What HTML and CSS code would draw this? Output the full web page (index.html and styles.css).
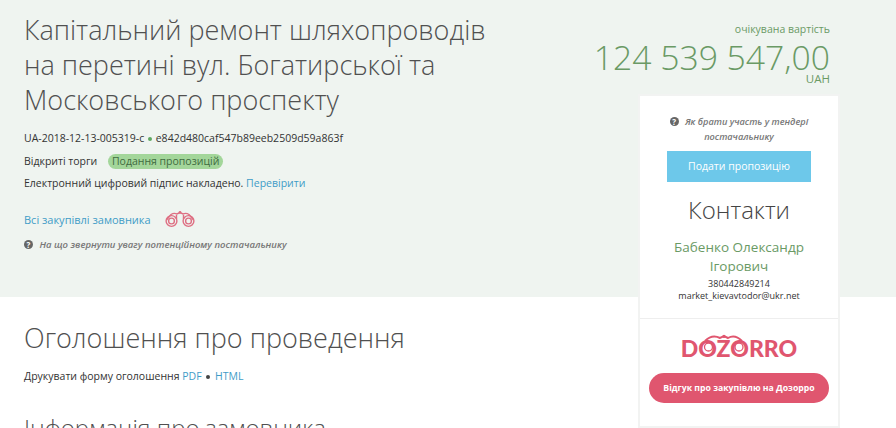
FILE: index.html
```html
<!DOCTYPE html>
<html lang="uk">
<head>
    <meta charset="UTF-8">
    <title>Капітальний ремонт шляхопроводів</title>
    <link rel="stylesheet" href="styles.css">
</head>
<body>
    <div class="page">
        <!-- Ліва колонка -->
        <div class="main">
            <h1 class="title">Капітальний ремонт шляхопроводів на перетині вул. Богатирської та Московського проспекту</h1>
            <p class="line">UA-2018-12-13-005319-c <span class="dot dot-green"></span> e842d480caf547b89eeb2509d59a863f</p>
            <p class="line">Відкриті торги <span class="status">Подання пропозицій</span></p>
            <p class="line">Електронний цифровий підпис накладено. <a href="#">Перевірити</a></p>
            <p class="buyer-line">
                <a href="#">Всі закупівлі замовника</a>
                <svg class="binoculars" width="32" height="18" viewBox="0 0 32 18" fill="none" stroke="#de6f83" stroke-width="1.4">
                    <path d="M2.5 10 L7 4.5 Q10 2.5 13 4 L16 2.6 L19 4 Q22 2.5 25 4.5 L29.5 10"/>
                    <path d="M12.5 9 L12.5 5 M19.5 9 L19.5 5"/>
                    <circle cx="16" cy="2.4" r="1.4" fill="#de6f83" stroke="none"/>
                    <circle cx="7.5" cy="11" r="5.4"/>
                    <circle cx="7.5" cy="11" r="2.9"/>
                    <circle cx="24.5" cy="11" r="5.4"/>
                    <circle cx="24.5" cy="11" r="2.9"/>
                </svg>
            </p>
            <p class="hint"><span class="hint-icon">?</span> На що звернути увагу потенційному постачальнику</p>

            <h2 class="section-title">Оголошення про проведення</h2>
            <p class="line print-line">Друкувати форму оголошення <a href="#">PDF</a> <span class="dot dot-dark"></span> <a href="#">HTML</a></p>
            <h2 class="subsection-title">Інформація про замовника</h2>
        </div>

        <!-- Права колонка -->
        <div class="side">
            <div class="price">
                <div class="price-label">очікувана вартість</div>
                <div class="price-value">124 539 547,00</div>
                <div class="price-cur">UAH</div>
            </div>
            <div class="card">
                <div class="card-top">
                    <p class="hint hint-center"><span class="hint-icon">?</span> Як брати участь у тендері постачальнику</p>
                    <a href="#" class="btn-blue">Подати пропозицію</a>
                    <div class="contacts-title">Контакти</div>
                    <div class="contact-name">Бабенко Олександр Ігорович</div>
                    <div class="contact-info">380442849214</div>
                    <div class="contact-info">market_kievavtodor@ukr.net</div>
                </div>
                <div class="card-bottom">
                    <div class="logo">
                        DOZORRO
                        <svg class="logo-eyes" width="50" height="26" viewBox="0 0 50 26" fill="none" stroke="#e0566f">
                            <path d="M6 10 Q13 3 21 7 L25 5 L29 7 Q36 3 43 10" stroke-width="2"/>
                            <circle cx="25" cy="5.4" r="1.6" fill="#e0566f" stroke="none"/>
                            <circle cx="9.5" cy="16" r="4" stroke-width="1.3"/>
                            <circle cx="40" cy="16" r="4" stroke-width="1.3"/>
                        </svg>
                    </div>
                    <a href="#" class="btn-red">Відгук про закупівлю на Дозорро</a>
                </div>
            </div>
        </div>
    </div>
</body>
</html>
```

FILE: styles.css
```css
* {
    margin: 0;
    padding: 0;
    box-sizing: border-box;
}
html, body {
    height: 428px;
    overflow: hidden;
}
body {
    font-family: 'Open Sans', sans-serif;
    color: #333;
    background: #fff;
}
a {
    color: #3f9cc7;
    text-decoration: none;
}

.page {
    display: flex;
    height: 428px;
    overflow: hidden;
    background: linear-gradient(#eff4f0 297px, #fff 297px);
}

/* Ліва колонка */
.main {
    width: 638px;
    padding: 12px 0 0 24px;
}
.title {
    width: 490px;
    font-size: 27px;
    font-weight: 300;
    line-height: 35px;
    color: #505050;
    margin-bottom: 10px;
}
.line {
    font-size: 10.5px;
    line-height: 22.5px;
    color: #333;
}
.print-line {
    line-height: 22px;
}
.dot {
    display: inline-block;
    width: 4px;
    height: 4px;
    margin: 0 1px;
    border-radius: 50%;
    vertical-align: 1px;
}
.dot-green { background: #5fa862; }
.dot-dark { background: #444; }
.print-line .dot { margin: 0 2px; }
.status {
    display: inline-block;
    margin-left: 8px;
    padding: 0 4px;
    line-height: 15px;
    border-radius: 8px;
    background: #a3d69a;
    color: #3f6b3f;
}
.buyer-line {
    display: flex;
    align-items: center;
    gap: 13px;
    height: 22px;
    margin-top: 13.5px;
    font-size: 11px;
}
.binoculars {
    display: block;
}
.hint {
    font-size: 9.5px;
    font-style: italic;
    font-weight: 600;
    line-height: 18px;
    color: #777;
    margin-top: 6px;
}
.hint-icon {
    display: inline-block;
    width: 9px;
    height: 9px;
    margin-right: 4px;
    border-radius: 50%;
    background: #666;
    color: #fff;
    font-size: 8px;
    font-style: normal;
    font-weight: 700;
    line-height: 9px;
    text-align: center;
    vertical-align: 0;
}
.section-title {
    font-size: 27px;
    font-weight: 300;
    line-height: 35px;
    color: #505050;
    margin-top: 66px;
    margin-bottom: 10px;
}
.subsection-title {
    font-size: 24px;
    font-weight: 300;
    line-height: 30px;
    color: #505050;
    margin-top: 26px;
}

/* Права колонка */
.side {
    width: 202px;
}
.price {
    text-align: right;
    padding: 21px 10px 0 0;
    margin-left: -60px;
}
.price-label {
    font-size: 10.5px;
    line-height: 16px;
    color: #6a9a65;
}
.price-value {
    font-size: 33.7px;
    font-weight: 300;
    line-height: 40px;
    color: #6a9a65;
}
.price-cur {
    font-size: 11.5px;
    line-height: 10px;
    margin-top: -3px;
    color: #6a9a65;
}
.card {
    height: 334px;
    margin-top: 10px;
    background: #fff;
    border: 2px solid #f2f3f2;
}
.card-top {
    padding: 18px 27px 0;
    height: 223px;
    text-align: center;
    border-bottom: 1px solid #eee;
}
.hint-center {
    margin: 0 0 6.5px;
    font-size: 9.2px;
    line-height: 15px;
}
.btn-blue {
    display: block;
    height: 31px;
    line-height: 31px;
    background: #6dc8ea;
    color: #fff;
    font-size: 10.5px;
}
.contacts-title {
    font-size: 24px;
    font-weight: 300;
    line-height: 32px;
    color: #444;
    margin-top: 12px;
}
.contact-name {
    font-size: 13.5px;
    line-height: 19px;
    color: #6a9a65;
    margin: 12px -10px 2px;
}
.contact-info {
    font-size: 9px;
    line-height: 12px;
    margin: 0 -20px;
    color: #333;
}
.card-bottom {
    padding-top: 17px;
    text-align: center;
}
.logo {
    position: relative;
    height: 24px;
    font-family: Lato, sans-serif;
    font-size: 23px;
    font-weight: 900;
    line-height: 24px;
    color: #e0566f;
}
.logo-eyes {
    position: absolute;
    left: 59px;
    top: -5px;
}
.btn-red {
    display: block;
    width: 180px;
    height: 30px;
    margin: 13px auto 0;
    border-radius: 15px;
    line-height: 30px;
    background: #e0566f;
    color: #fff;
    font-size: 8.7px;
    font-weight: 700;
}
```
